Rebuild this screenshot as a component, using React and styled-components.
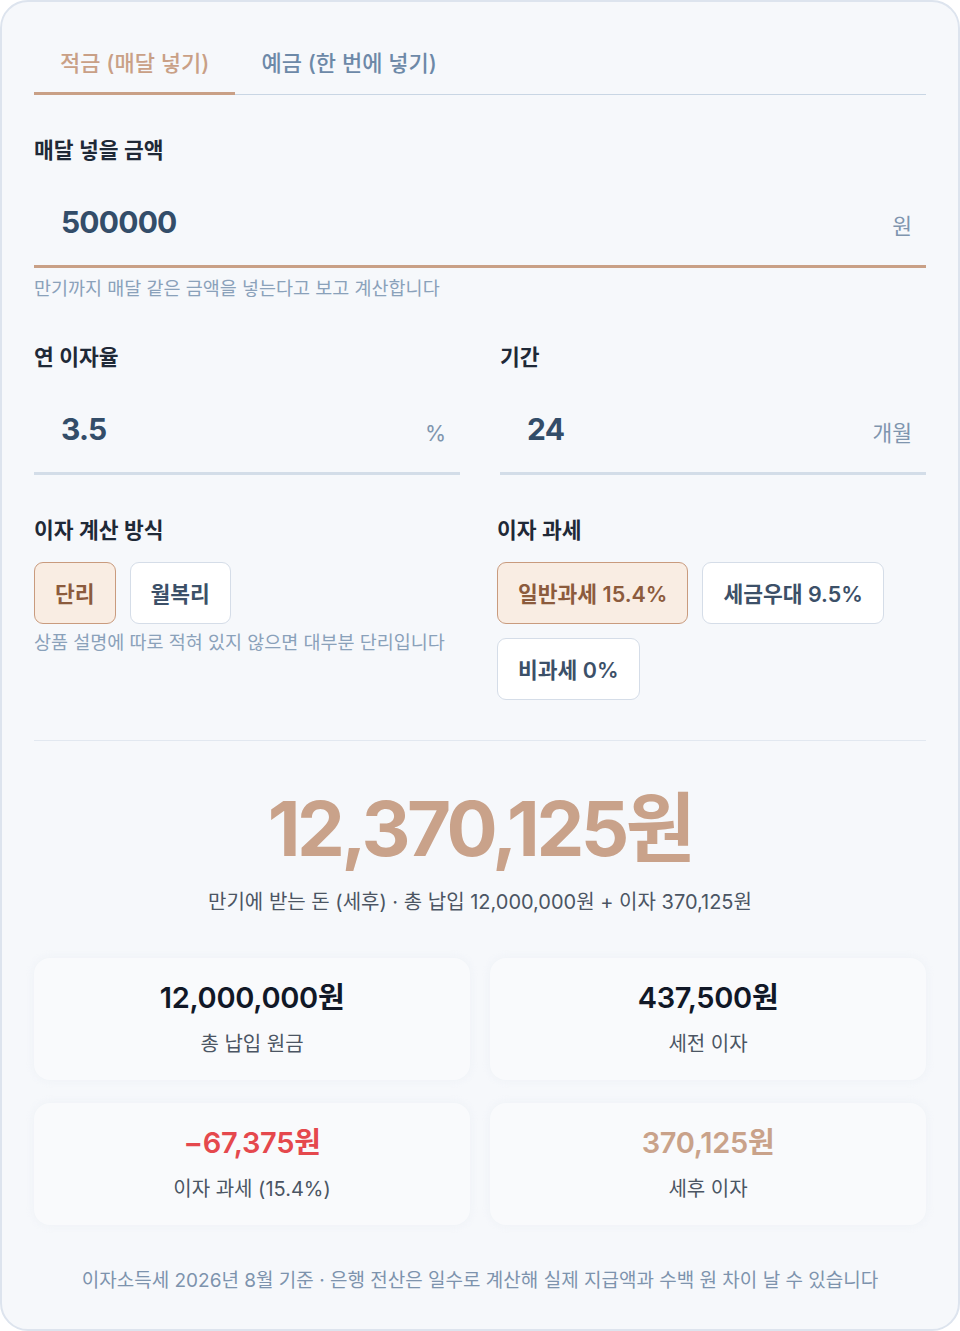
import React, { useState } from 'react';
import styled, { createGlobalStyle } from 'styled-components';

const GlobalStyle = createGlobalStyle`
  html, body {
    margin: 0;
    padding: 0;
    background: #ffffff;
  }
  body {
    font-family: Inter, "Noto Sans CJK KR", sans-serif;
  }
  * {
    box-sizing: border-box;
  }
`;

const Card = styled.div`
  width: 960px;
  min-height: 1331px;
  background: #f6f8fb;
  border: 2px solid #dde4ee;
  border-radius: 28px;
  padding: 42px 32px 36px;
  display: flex;
  flex-direction: column;
`;

const Tabs = styled.div`
  display: flex;
  border-bottom: 1.5px solid #c9d6e4;
`;

const Tab = styled.button`
  background: none;
  border: none;
  font-family: inherit;
  font-size: 22px;
  font-weight: 500;
  line-height: 30px;
  padding: 4px 26px 14px;
  margin-bottom: -1.5px;
  cursor: pointer;
  color: ${p => (p.active ? '#c9a086' : '#6d89a8')};
  border-bottom: 3px solid ${p => (p.active ? '#c9a086' : 'transparent')};
`;

const Label = styled.div`
  font-size: 21.5px;
  font-weight: 600;
  color: #1f2937;
  margin-bottom: ${p => p.mb || 18}px;
`;

const Field = styled.div`
  display: flex;
  align-items: flex-end;
  justify-content: space-between;
  padding: 0 14px 23px 27px;
  border-bottom: 3px solid ${p => (p.focus ? '#c9a086' : '#d3dde8')};
`;

const Value = styled.span`
  font-size: 30px;
  font-weight: 700;
  color: #334d69;
  letter-spacing: -0.8px;
  line-height: 40px;
`;

const Unit = styled.span`
  font-size: 21.5px;
  color: #7f95ae;
  line-height: 32px;
`;

const Hint = styled.div`
  font-size: 18.5px;
  color: #8aa1ba;
  margin-top: ${p => p.mt || 6}px;
`;

const Section = styled.div`
  margin-top: ${p => p.mt || 0}px;
`;

const Row = styled.div`
  display: grid;
  grid-template-columns: 1fr 1fr;
  column-gap: ${p => p.gap || 40}px;
  margin-top: ${p => p.mt || 0}px;
`;

const Options = styled.div`
  display: flex;
  flex-wrap: wrap;
  gap: 14px;
  max-width: 400px;
`;

const Option = styled.button`
  height: 62px;
  padding: 0 20px;
  border-radius: 9px;
  font-family: inherit;
  font-size: 21.5px;
  font-weight: 600;
  cursor: pointer;
  background: ${p => (p.active ? '#f9ede3' : '#ffffff')};
  border: 1.5px solid ${p => (p.active ? '#c99b7e' : '#d5dde8')};
  color: ${p => (p.active ? '#8c5b3d' : '#3c5068')};
`;

const Divider = styled.hr`
  border: none;
  border-top: 1.5px solid #e2e8f0;
  margin: 40px 0 0;
`;

const Result = styled.div`
  text-align: center;
  margin-top: 39px;
`;

const BigNumber = styled.div`
  font-size: 76px;
  font-weight: 700;
  color: #c9a28a;
  letter-spacing: -3.5px;
  line-height: 96px;
`;

const ResultSub = styled.div`
  font-size: 20px;
  color: #4b5563;
  margin-top: 10px;
`;

const StatGrid = styled.div`
  display: grid;
  grid-template-columns: 1fr 1fr;
  gap: 23px 20px;
  margin-top: 43px;
`;

const Stat = styled.div`
  background: #f9fafc;
  border-radius: 16px;
  box-shadow: 0 0 8px rgba(228, 233, 241, 0.45);
  height: 122px;
  padding-bottom: 6px;
  display: flex;
  flex-direction: column;
  align-items: center;
  justify-content: center;
  gap: 12px;
`;

const StatValue = styled.div`
  font-size: 29px;
  font-weight: 600;
  letter-spacing: -0.3px;
  color: ${p => p.color || '#111827'};
`;

const StatLabel = styled.div`
  font-size: 20px;
  color: #4b5563;
`;

const Footer = styled.div`
  text-align: center;
  font-size: 19px;
  color: #7d93ad;
  margin-top: 40px;
`;

const App = () => {
  const [tab, setTab] = useState('saving');
  const [method, setMethod] = useState('simple');
  const [tax, setTax] = useState('normal');

  return (
    <>
      <GlobalStyle />
      <Card>
        <Tabs>
          <Tab active={tab === 'saving'} onClick={() => setTab('saving')}>적금 (매달 넣기)</Tab>
          <Tab active={tab === 'deposit'} onClick={() => setTab('deposit')}>예금 (한 번에 넣기)</Tab>
        </Tabs>

        <Section mt={38}>
          <Label mb={38}>매달 넣을 금액</Label>
          <Field focus>
            <Value>500000</Value>
            <Unit>원</Unit>
          </Field>
          <Hint>만기까지 매달 같은 금액을 넣는다고 보고 계산합니다</Hint>
        </Section>

        <Row mt={40}>
          <div>
            <Label mb={38}>연 이자율</Label>
            <Field>
              <Value>3.5</Value>
              <Unit>%</Unit>
            </Field>
          </div>
          <div>
            <Label mb={38}>기간</Label>
            <Field>
              <Value>24</Value>
              <Unit>개월</Unit>
            </Field>
          </div>
        </Row>

        <Row mt={38} gap={34}>
          <div>
            <Label mb={18}>이자 계산 방식</Label>
            <Options>
              <Option active={method === 'simple'} onClick={() => setMethod('simple')}>단리</Option>
              <Option active={method === 'monthly'} onClick={() => setMethod('monthly')}>월복리</Option>
            </Options>
            <Hint mt={4}>상품 설명에 따로 적혀 있지 않으면 대부분 단리입니다</Hint>
          </div>
          <div>
            <Label mb={18}>이자 과세</Label>
            <Options>
              <Option active={tax === 'normal'} onClick={() => setTax('normal')}>일반과세 15.4%</Option>
              <Option active={tax === 'pref'} onClick={() => setTax('pref')}>세금우대 9.5%</Option>
              <Option active={tax === 'free'} onClick={() => setTax('free')}>비과세 0%</Option>
            </Options>
          </div>
        </Row>

        <Divider />

        <Result>
          <BigNumber>12,370,125원</BigNumber>
          <ResultSub>만기에 받는 돈 (세후) · 총 납입 12,000,000원 + 이자 370,125원</ResultSub>
        </Result>

        <StatGrid>
          <Stat>
            <StatValue>12,000,000원</StatValue>
            <StatLabel>총 납입 원금</StatLabel>
          </Stat>
          <Stat>
            <StatValue>437,500원</StatValue>
            <StatLabel>세전 이자</StatLabel>
          </Stat>
          <Stat>
            <StatValue color="#e5484d">−67,375원</StatValue>
            <StatLabel>이자 과세 (15.4%)</StatLabel>
          </Stat>
          <Stat>
            <StatValue color="#c9a28a">370,125원</StatValue>
            <StatLabel>세후 이자</StatLabel>
          </Stat>
        </StatGrid>

        <Footer>이자소득세 2026년 8월 기준 · 은행 전산은 일수로 계산해 실제 지급액과 수백 원 차이 날 수 있습니다</Footer>
      </Card>
    </>
  );
};

export default App;
